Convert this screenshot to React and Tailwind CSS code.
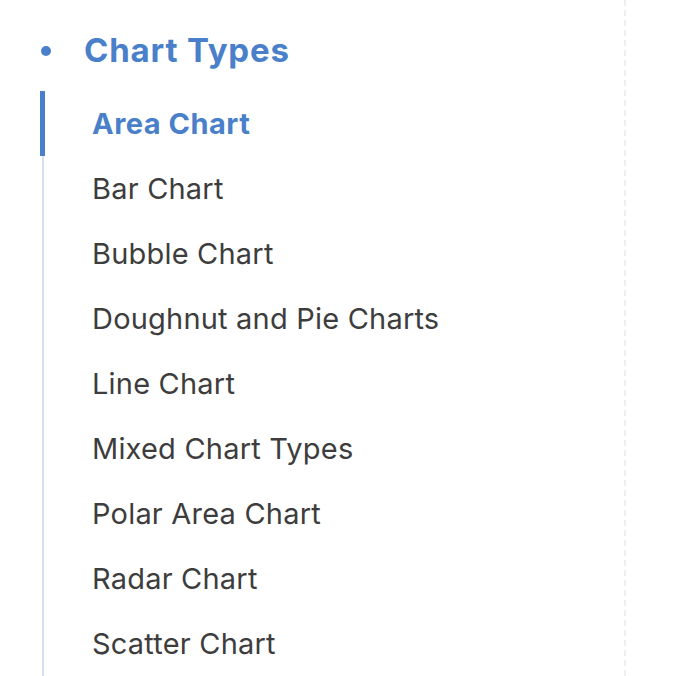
import React from 'react';

const items = [
  'Area Chart',
  'Bar Chart',
  'Bubble Chart',
  'Doughnut and Pie Charts',
  'Line Chart',
  'Mixed Chart Types',
  'Polar Area Chart',
  'Radar Chart',
  'Scatter Chart',
];

const App = () => {
  return (
    <div className="h-[676px] w-[692px] overflow-hidden bg-white font-['Inter',sans-serif]">
      <div className="h-full w-[626px] border-r-2 border-dashed border-[#efefef] pt-[31px]">
        {/* Section heading */}
        <div className="flex h-10 items-center">
          <span className="ml-[41px] h-[10px] w-[10px] rounded-full bg-[#4a7fc9]" />
          <span className="ml-[33px] text-[33px] font-bold tracking-[0.8px] text-[#4a7fc9]">Chart Types</span>
        </div>
        {/* Items */}
        <ul className="ml-[42px] mt-5 border-l-2 border-[#d6e0f0]">
          {items.map((item, i) => (
            <li key={item} className="relative flex h-[65px] items-center pl-[48px]">
              {i === 0 && <span className="absolute -left-[4px] top-0 h-full w-[5px] bg-[#4a7fc9]" />}
              <span
                className={`text-[29px] ${i === 0 ? 'font-bold tracking-[0.5px] text-[#4a7fc9]' : 'tracking-[0.2px] text-[#3d3d3d]'}`}
              >
                {item}
              </span>
            </li>
          ))}
        </ul>
      </div>
    </div>
  );
};

export default App;
